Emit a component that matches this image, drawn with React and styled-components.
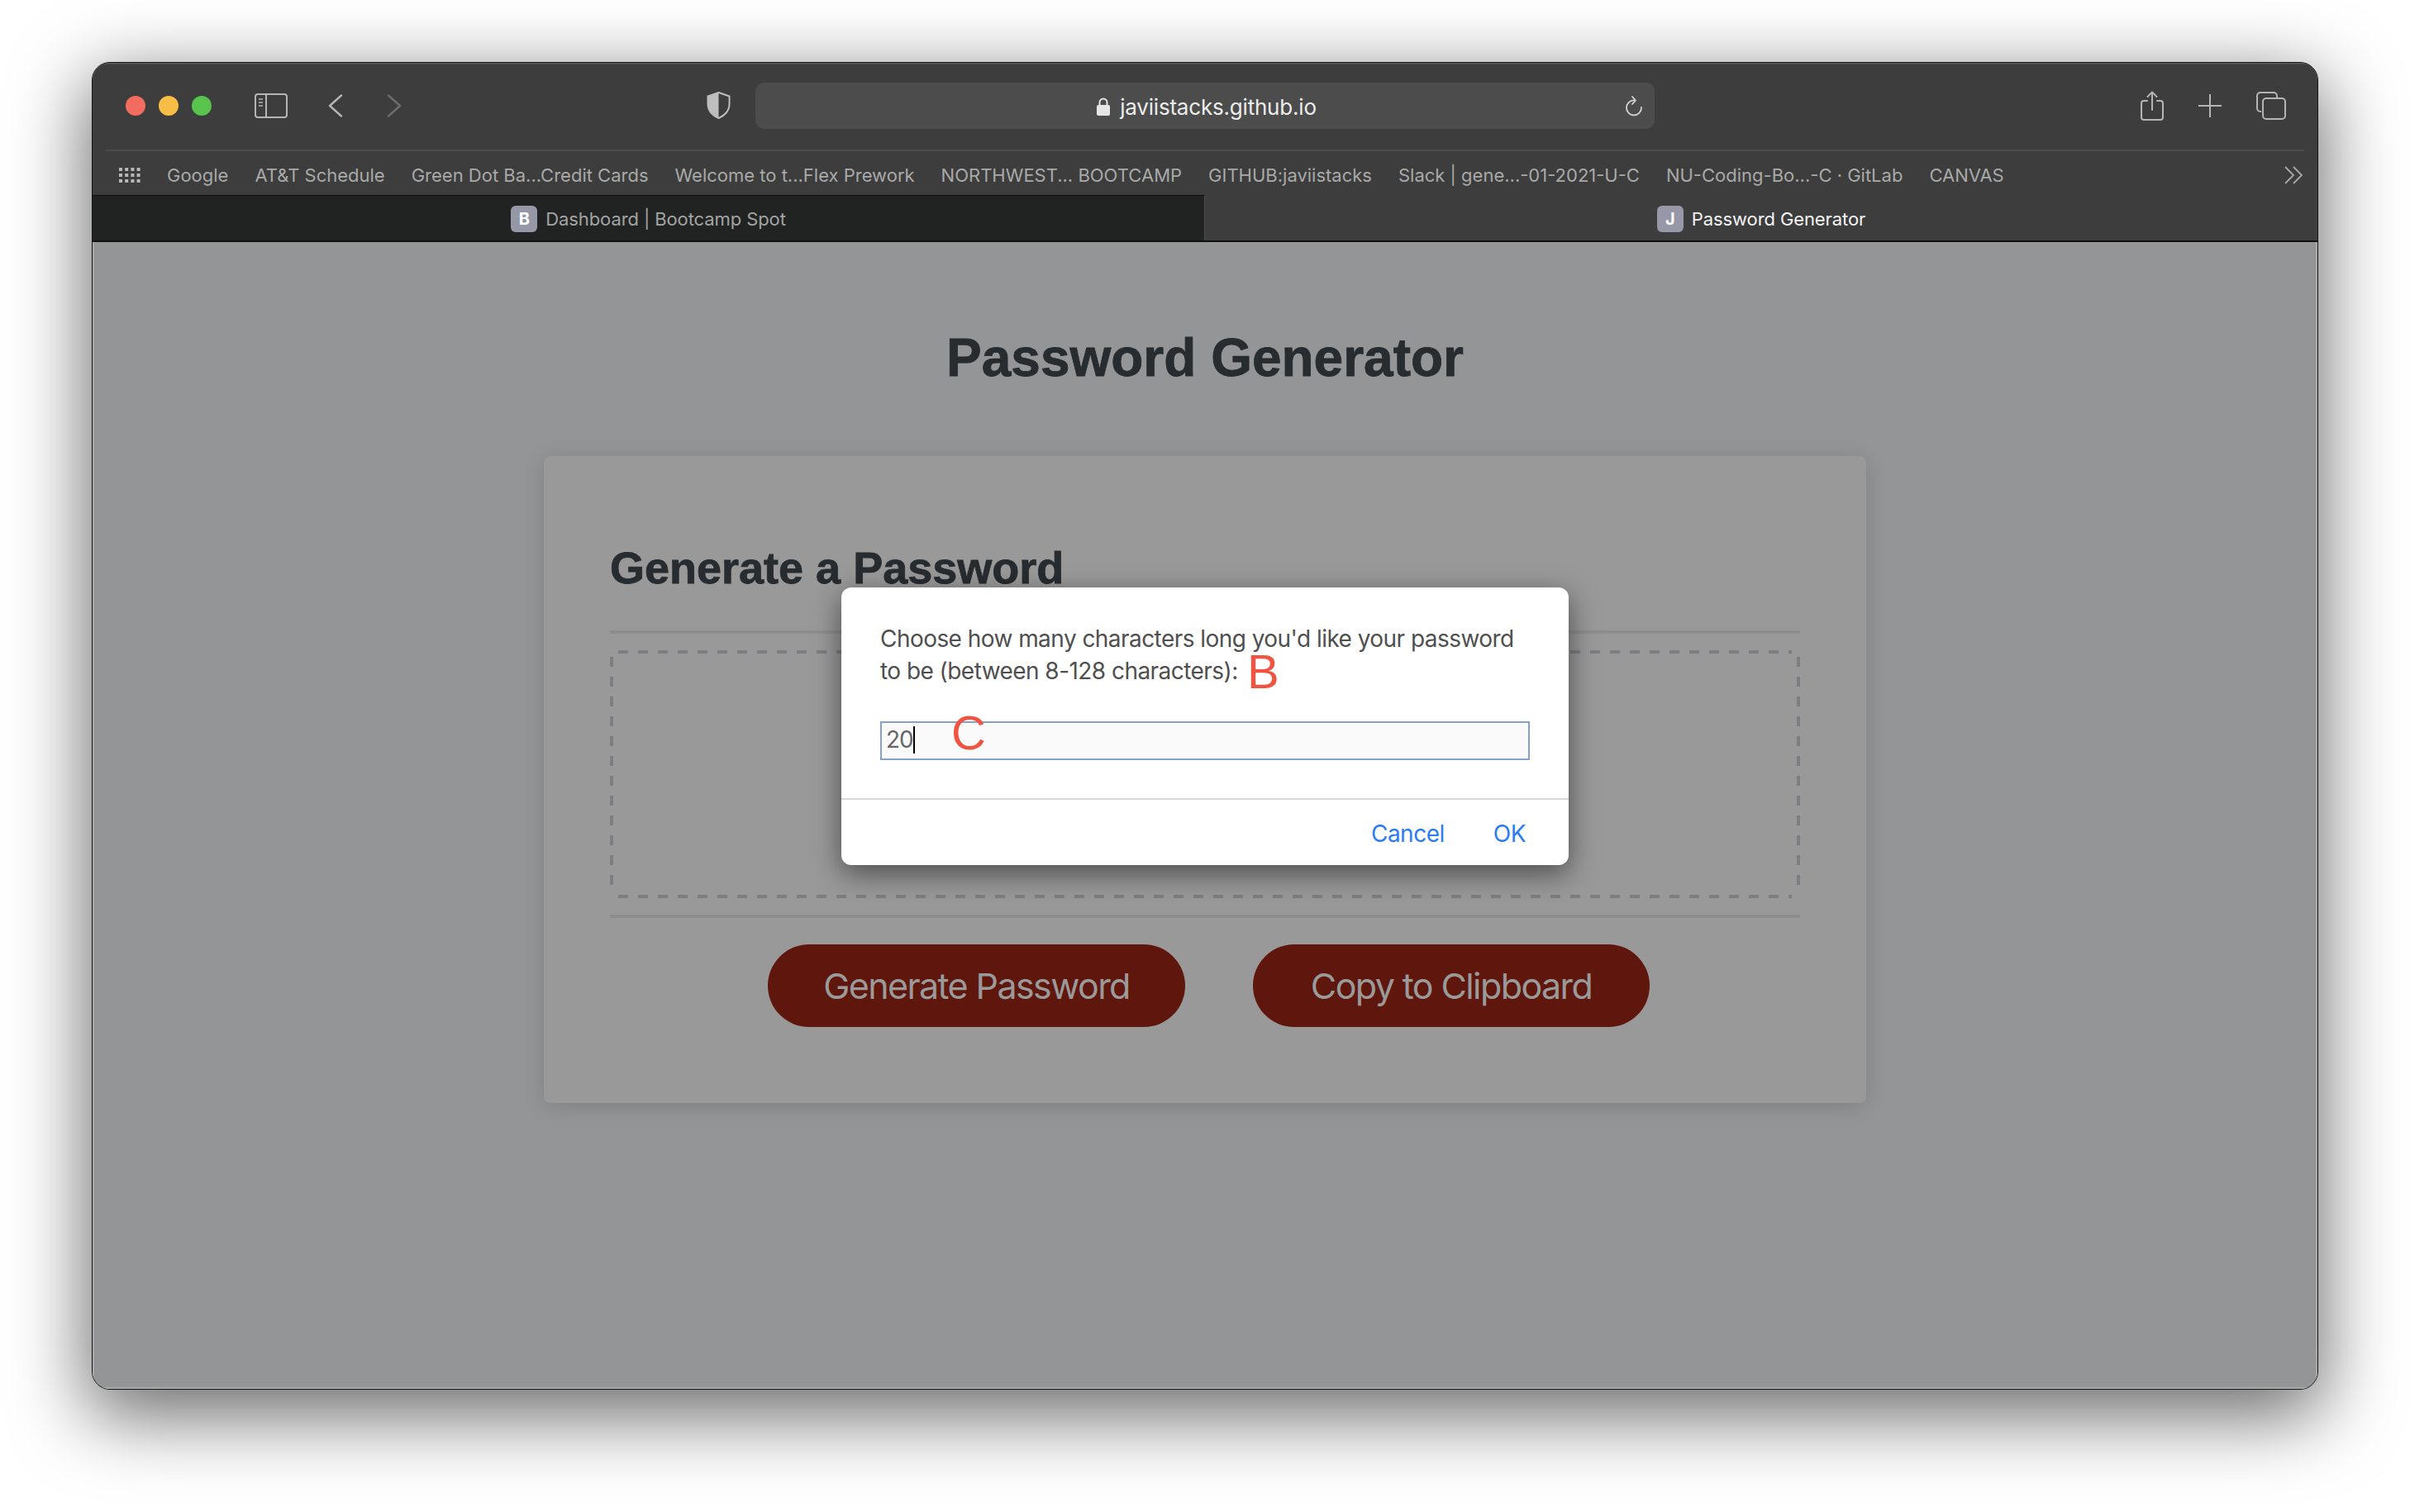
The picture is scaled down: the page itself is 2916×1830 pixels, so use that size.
import React from 'react';
import styled, { createGlobalStyle } from 'styled-components';

const GlobalStyle = createGlobalStyle`
  html, body {
    margin: 0;
    padding: 0;
    background: #ffffff;
  }
  * {
    box-sizing: border-box;
  }
`;

const Desktop = styled.div`
  width: 2916px;
  height: 1830px;
  padding: 75px 111px 148px;
  background: #ffffff;
  overflow: hidden;
`;

const BrowserWindow = styled.div`
  height: 100%;
  display: flex;
  flex-direction: column;
  border: 1.5px solid #161616;
  border-radius: 22px;
  overflow: hidden;
  background: #949597;
  box-shadow: 0 26px 90px 6px rgba(0, 0, 0, 0.58);
  font-family: Inter, "Liberation Sans", sans-serif;
`;

const Toolbar = styled.div`
  flex: 0 0 105px;
  display: flex;
  align-items: center;
  padding: 0 38px 2px 40px;
  background: #3c3d3c;
  box-shadow: inset 0 1.5px 0 #5d5e5d;
`;

const TrafficLights = styled.div`
  display: flex;
  gap: 16px;
`;

const Light = styled.span`
  width: 24px;
  height: 24px;
  border-radius: 50%;
  background: ${(p) => p.$color};
`;

const ToolIcon = styled.svg`
  flex: none;
  display: block;
  margin-left: ${(p) => p.$ml || 0}px;
  color: ${(p) => p.$color || '#b5b5b5'};
`;

const AddressBar = styled.div`
  position: relative;
  width: 1088px;
  height: 56px;
  margin-left: 30px;
  padding: 3px 0 0 4px;
  display: flex;
  align-items: center;
  justify-content: center;
  gap: 12px;
  border-radius: 10px;
  background: #4b4c4b;
  color: #ececec;
  font-size: 26px;
  letter-spacing: -0.2px;
`;

const ReloadSlot = styled.span`
  position: absolute;
  right: 14px;
  top: 16px;
  display: flex;
`;

const ToolbarRight = styled.div`
  margin-left: auto;
  display: flex;
  align-items: center;
  gap: 42px;
`;

const Divider = styled.div`
  height: 2px;
  flex: none;
  background: #3c3d3c;
  padding: 0 16px;
  &::before {
    content: '';
    display: block;
    height: 2px;
    background: #4b4c4b;
  }
`;

const BookmarksBar = styled.div`
  flex: 0 0 53px;
  display: flex;
  align-items: center;
  gap: 32px;
  padding: 5px 17px 0 32px;
  background: #3c3d3c;
  color: #a9a9a9;
  font-size: 22px;
  white-space: nowrap;
`;

const TabStrip = styled.div`
  flex: 0 0 57px;
  display: grid;
  grid-template-columns: 1fr 1fr;
  border-bottom: 2px solid #111;
`;

const Tab = styled.div`
  display: flex;
  align-items: center;
  justify-content: center;
  gap: 10px;
  padding-top: 1px;
  font-size: 22px;
  letter-spacing: -0.1px;
  background: ${(p) => (p.$active ? '#3c3d3c' : '#212322')};
  color: ${(p) => (p.$active ? '#f4f4f4' : '#a3a3a3')};
  border-top: 1.5px solid ${(p) => (p.$active ? '#3c3d3c' : '#0f0f0f')};
  border-right: ${(p) => (p.$active ? '0' : '1.5px solid #4b4c4b')};
`;

const Favicon = styled.span`
  width: 32px;
  height: 32px;
  display: flex;
  align-items: center;
  justify-content: center;
  border-radius: 6px;
  background: #9698a8;
  color: #ffffff;
  font-size: 20px;
  font-weight: 700;
`;

const PageContent = styled.main`
  flex: 1;
  position: relative;
  display: flex;
  flex-direction: column;
  align-items: center;
  background: #949597;
  box-shadow: inset 2px 0 0 #a9a9ab, inset -2px 0 0 #a9a9ab, inset 0 -2px 0 #a9a9ab;
  color: #272c31;
  font-family: "Liberation Sans", Arial, sans-serif;
`;

const PageTitle = styled.h1`
  margin: 102px 0 0;
  font-size: 64px;
  line-height: 76px;
  font-weight: 700;
  -webkit-text-stroke: 0.8px #272c31;
`;

const Card = styled.section`
  width: 1600px;
  height: 783px;
  margin-top: 81px;
  padding: 103px 80px 0;
  border-radius: 8px;
  background: #999999;
  box-shadow: 0 4px 26px rgba(0, 0, 0, 0.14);
`;

const CardHead = styled.div`
  display: flex;
  flex-direction: column;
  gap: 44px;
`;

const CardTitle = styled.h2`
  margin: 0;
  font-size: 54px;
  line-height: 64px;
  font-weight: 700;
  -webkit-text-stroke: 0.8px #272c31;
`;

const Rule = styled.hr`
  margin: 0;
  height: 4px;
  border: 0;
  background: #8e8e8e;
`;

const dash = '#7c7e84';

const PasswordBox = styled.div`
  height: 300px;
  margin: 20px 0;
  background:
    repeating-linear-gradient(90deg, ${dash} 0 12px, transparent 12px 24px) 10px 0 / calc(100% - 20px) 4px no-repeat,
    repeating-linear-gradient(90deg, ${dash} 0 12px, transparent 12px 24px) 10px 100% / calc(100% - 20px) 4px no-repeat,
    repeating-linear-gradient(180deg, ${dash} 0 12px, transparent 12px 24px) 0 8px / 4px calc(100% - 16px) no-repeat,
    repeating-linear-gradient(180deg, ${dash} 0 12px, transparent 12px 24px) 100% 8px / 4px calc(100% - 16px) no-repeat;
`;

const ButtonRow = styled.div`
  display: flex;
  justify-content: center;
  gap: 82px;
  margin-top: 32px;
  padding-left: 9px;
`;

const RedButton = styled.button`
  width: ${(p) => p.$width}px;
  height: 100px;
  padding: 0;
  border: 0;
  border-radius: 50px;
  background: #5f160c;
  color: #9a9a9a;
  font-family: Inter, "Liberation Sans", sans-serif;
  font-size: 43px;
  letter-spacing: -1.6px;
`;

const PromptLayer = styled.div`
  position: absolute;
  top: 418px;
  left: 0;
  right: 0;
  display: flex;
  justify-content: center;
`;

const PromptDialog = styled.div`
  position: relative;
  width: 880px;
  height: 336px;
  display: flex;
  flex-direction: column;
  border-radius: 12px;
  background: #ffffff;
  box-shadow: 0 10px 34px rgba(0, 0, 0, 0.5);
  font-family: Inter, "Liberation Sans", sans-serif;
`;

const PromptBody = styled.div`
  flex: 0 0 257px;
  padding: 43px 47px 0 47px;
  border-bottom: 2px solid #d8d8d8;
`;

const PromptText = styled.p`
  margin: 0;
  color: #4f4f4f;
  font-size: 28px;
  line-height: 39px;
  letter-spacing: -0.55px;
  white-space: nowrap;
`;

const PromptInput = styled.div`
  height: 47px;
  margin-top: 41px;
  display: flex;
  align-items: center;
  padding: 0 0 3px 5px;
  border: 2px solid #85a2cf;
  background: #fafafa;
  color: #666666;
  font-size: 28px;
  letter-spacing: -1px;
`;

const Caret = styled.span`
  width: 2px;
  height: 33px;
  background: #000000;
`;

const PromptActions = styled.div`
  flex: 1;
  display: flex;
  justify-content: flex-end;
  align-items: center;
  gap: 59px;
  padding: 3px 52px 0 0;
  color: #2a7bf5;
  font-size: 28px;
  letter-spacing: -0.5px;
`;

const Annotation = styled.span`
  position: absolute;
  left: ${(p) => p.$x}px;
  top: ${(p) => p.$y}px;
  color: #f0533f;
  font-family: "Liberation Sans", Arial, sans-serif;
  font-size: 58px;
  line-height: 1;
`;

const bookmarks = [
  'Google',
  'AT&T Schedule',
  'Green Dot Ba...Credit Cards',
  'Welcome to t...Flex Prework',
  'NORTHWEST... BOOTCAMP',
  'GITHUB:javiistacks',
  'Slack | gene...-01-2021-U-C',
  'NU-Coding-Bo...-C · GitLab',
  'CANVAS',
];

function SidebarIcon() {
  return (
    <ToolIcon $ml={52} width="40" height="30" viewBox="0 0 40 30" fill="none" stroke="currentColor" strokeWidth="2">
      <rect x="1" y="1" width="38" height="28" rx="3" />
      <path d="M14 1v28" />
      <path d="M5 7h5M5 11h5M5 15h5" strokeWidth="1.5" />
    </ToolIcon>
  );
}

function Chevron({ ml, color, flip }) {
  return (
    <ToolIcon $ml={ml} $color={color} width="18" height="28" viewBox="0 0 18 28" fill="none" stroke="currentColor" strokeWidth="2.4" strokeLinecap="round" strokeLinejoin="round">
      <path d={flip ? 'M2 1.5L16 14L2 26.5' : 'M16 1.5L2 14L16 26.5'} />
    </ToolIcon>
  );
}

function ShieldIcon() {
  return (
    <ToolIcon $ml={369} $color="#bdbebd" width="29" height="33" viewBox="0 0 29 33">
      <path d="M14.5 1L27.5 5.5V15C27.5 23.5 21 29.5 14.5 32C8 29.5 1.5 23.5 1.5 15V5.5Z" fill="none" stroke="currentColor" strokeWidth="2" />
      <path d="M14.5 1L1.5 5.5V15C1.5 23.5 8 29.5 14.5 32Z" fill="currentColor" />
    </ToolIcon>
  );
}

function LockIcon() {
  return (
    <ToolIcon $color="#e6e6e6" width="16" height="22" viewBox="0 0 16 22">
      <path d="M3.5 10V6a4.5 4.5 0 0 1 9 0v4" fill="none" stroke="currentColor" strokeWidth="2" />
      <rect x="0" y="9" width="16" height="13" rx="2" fill="currentColor" />
    </ToolIcon>
  );
}

function ReloadIcon() {
  return (
    <ToolIcon $color="#d2d2d2" width="22" height="25" viewBox="0 0 22 25" fill="none" stroke="currentColor" strokeWidth="1.8" strokeLinecap="round" strokeLinejoin="round">
      <path d="M12 5.5A9 9 0 1 0 20 14" />
      <path d="M9 1L13 5.5L9 10" />
    </ToolIcon>
  );
}

function ShareIcon() {
  return (
    <ToolIcon width="28" height="36" viewBox="0 0 28 36" fill="none" stroke="currentColor" strokeWidth="2" strokeLinecap="round" strokeLinejoin="round">
      <path d="M8 12H4a3 3 0 0 0-3 3v17a3 3 0 0 0 3 3h20a3 3 0 0 0 3-3V15a3 3 0 0 0-3-3h-4" />
      <path d="M14 23V1.5M8.5 7L14 1.5L19.5 7" />
    </ToolIcon>
  );
}

function PlusIcon() {
  return (
    <ToolIcon width="28" height="28" viewBox="0 0 28 28" fill="none" stroke="currentColor" strokeWidth="2">
      <path d="M14 0v28M0 14h28" />
    </ToolIcon>
  );
}

function TabsIcon() {
  return (
    <ToolIcon width="36" height="34" viewBox="0 0 36 34" fill="none" stroke="currentColor" strokeWidth="2">
      <path d="M6 24H5a4 4 0 0 1-4-4V5a4 4 0 0 1 4-4h16a4 4 0 0 1 4 4v2" />
      <rect x="8" y="8" width="27" height="25" rx="4" />
    </ToolIcon>
  );
}

function GridIcon() {
  const dots = [];
  for (let row = 0; row < 3; row++) {
    for (let col = 0; col < 4; col++) {
      dots.push(<rect key={`${row}-${col}`} x={col * 7.2} y={row * 7} width="4" height="4" />);
    }
  }
  return (
    <ToolIcon $color="#b8b8b8" width="26" height="19" viewBox="0 0 26 19" fill="currentColor">
      {dots}
    </ToolIcon>
  );
}

function DoubleChevronIcon() {
  return (
    <ToolIcon $color="#a9a9a9" width="23" height="22" viewBox="0 0 23 22" fill="none" stroke="currentColor" strokeWidth="1.8" style={{ marginLeft: 'auto' }}>
      <path d="M1 1L11 11L1 21M11 1L21 11L11 21" />
    </ToolIcon>
  );
}

export default function App() {
  return (
    <Desktop>
      <GlobalStyle />
      <BrowserWindow>
        <Toolbar>
          <TrafficLights>
            <Light $color="#f26d60" />
            <Light $color="#f7bd45" />
            <Light $color="#58c44e" />
          </TrafficLights>
          <SidebarIcon />
          <Chevron ml={49} />
          <Chevron ml={53} color="#6b6c6b" flip />
          <ShieldIcon />
          <AddressBar>
            <LockIcon />
            <span>javiistacks.github.io</span>
            <ReloadSlot>
              <ReloadIcon />
            </ReloadSlot>
          </AddressBar>
          <ToolbarRight>
            <ShareIcon />
            <PlusIcon />
            <TabsIcon />
          </ToolbarRight>
        </Toolbar>
        <Divider />
        <BookmarksBar>
          <GridIcon />
          {bookmarks.map((name) => (
            <span key={name}>{name}</span>
          ))}
          <DoubleChevronIcon />
        </BookmarksBar>
        <TabStrip>
          <Tab>
            <Favicon>B</Favicon>
            Dashboard | Bootcamp Spot
          </Tab>
          <Tab $active>
            <Favicon>J</Favicon>
            Password Generator
          </Tab>
        </TabStrip>
        <PageContent>
          <PageTitle>Password Generator</PageTitle>
          <Card>
            <CardHead>
              <CardTitle>Generate a Password</CardTitle>
              <Rule />
            </CardHead>
            <PasswordBox />
            <Rule />
            <ButtonRow>
              <RedButton $width={505}>Generate Password</RedButton>
              <RedButton $width={480}>Copy to Clipboard</RedButton>
            </ButtonRow>
          </Card>
          <PromptLayer>
            <PromptDialog>
              <PromptBody>
                <PromptText>
                  Choose how many characters long you'd like your password
                  <br />
                  to be (between 8-128 characters):
                </PromptText>
                <PromptInput>
                  20
                  <Caret />
                </PromptInput>
              </PromptBody>
              <PromptActions>
                <span>Cancel</span>
                <span>OK</span>
              </PromptActions>
              <Annotation $x={491} $y={73}>B</Annotation>
              <Annotation $x={133} $y={147}>C</Annotation>
            </PromptDialog>
          </PromptLayer>
        </PageContent>
      </BrowserWindow>
    </Desktop>
  );
}
